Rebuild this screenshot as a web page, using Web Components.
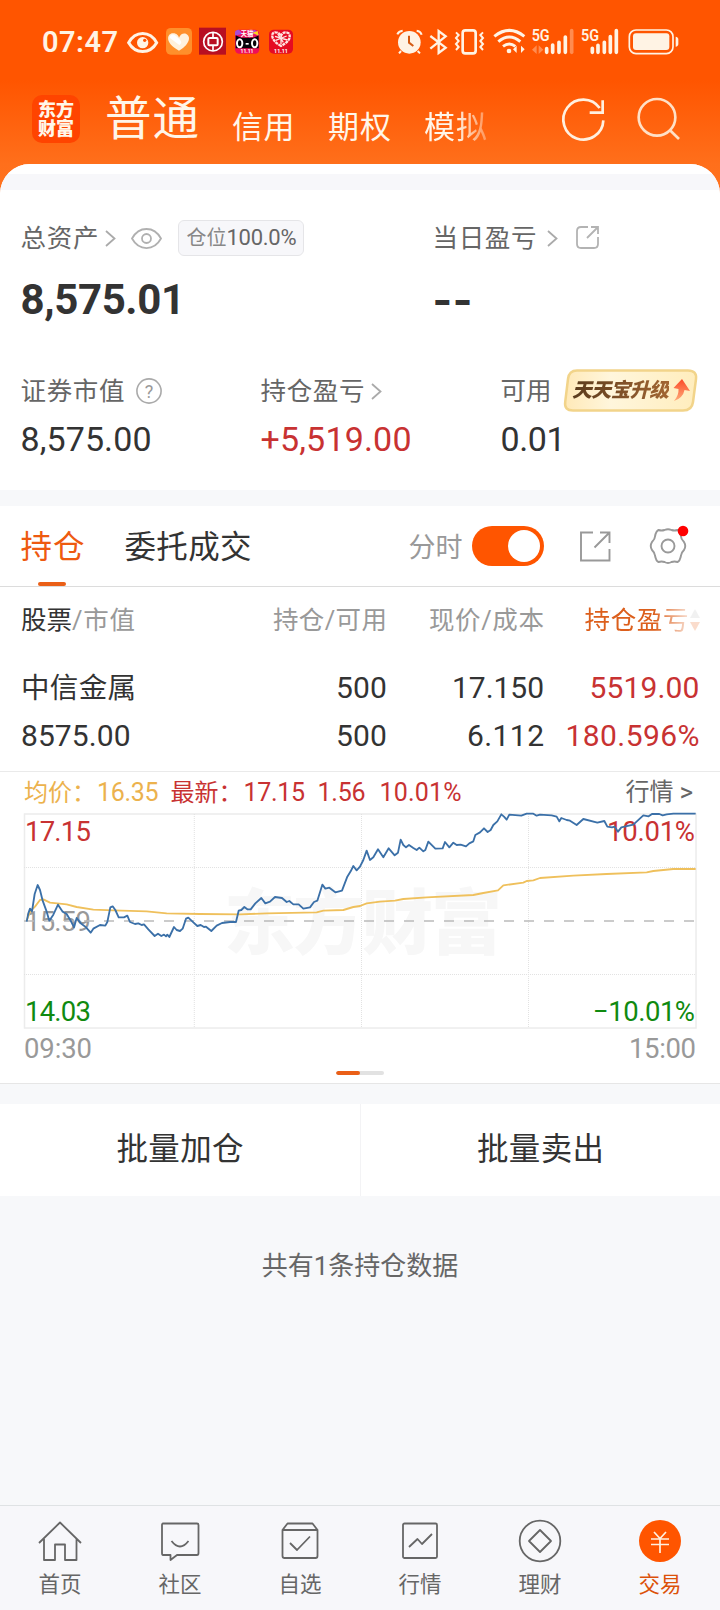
<!DOCTYPE html>
<html lang="zh-CN">
<head>
<meta charset="utf-8">
<title>交易 · 持仓</title>
<style>
body{margin:0;background:#f7f8fa;font-family:Roboto,"Noto Sans CJK SC",sans-serif;color:#333}
</style>
</head>
<body>
<trade-screen>
  <status-bar slot="top"></status-bar>
  <account-tabs slot="top"></account-tabs>
  <asset-summary></asset-summary>
  <holding-tabs></holding-tabs>
  <holding-table></holding-table>
  <minute-chart></minute-chart>
  <batch-actions></batch-actions>
  <list-footer>共有1条持仓数据</list-footer>
  <bottom-nav slot="nav"></bottom-nav>
</trade-screen>
<script>
const define = (name, css, html) => customElements.define(name, class extends HTMLElement {
  constructor(){
    super();
    this.attachShadow({mode:'open'}).innerHTML = `<style>:host{display:block;box-sizing:border-box}*{box-sizing:border-box}svg{display:block;overflow:visible}${css}</style>${html}`;
  }
});

/* One line of text: s = size, w = total width, reached by letter spacing */
customElements.define('fit-text', class extends HTMLElement {
  constructor(){
    super();
    this.attachShadow({mode:'open'}).innerHTML =
      `<style>:host{display:block;white-space:pre;line-height:1.2;width:max-content}span{display:inline-block}</style><span><slot></slot></span>`;
  }
  connectedCallback(){
    this.style.fontSize = this.getAttribute('s') + 'px';
    const w = +this.getAttribute('w'); if(!w) return;
    const span = this.shadowRoot.querySelector('span');
    const n = this.textContent.length - 1;
    const ls = (w - span.getBoundingClientRect().width) / n;
    this.style.letterSpacing = ls.toFixed(3) + 'px';
    span.style.marginRight = (-ls).toFixed(3) + 'px';
  }
});

define('trade-screen', `
  :host{display:flex;flex-direction:column;width:720px;height:1610px;background:#f7f8fa;overflow:hidden}
  header{height:164px;flex:none}
  .shell{background:linear-gradient(#f50 0,#f50 80px,#ff6f1b 164px,#ff731f 200px);height:1505px;flex:none}
  main{background:#f7f8fa;height:1341px;border-radius:30px 30px 0 0;overflow:hidden}
  .cap{height:10px;background:#fff}.gap{height:16px;background:#f7f7fa}
`, `<div class="shell"><header><slot name="top"></slot></header><main><div class="cap"></div><div class="gap"></div><slot></slot></main></div><slot name="nav"></slot>`);

define('status-bar', `
  :host{height:84px;color:#fff3e4}
  .row{display:flex;align-items:center;height:84px;padding-left:42px}
  .r{margin-left:100px}
`, `<div class="row"><fit-text s="29" w="76" style="font-weight:600">07:47</fit-text>
<svg width="170" height="30" viewBox="378 82 510 90" style="margin-left:8px" fill="none">
  <g stroke="#fff3e4" stroke-width="9"><path d="M386 129C406 92 450 92 470 129C450 164 406 164 386 129Z"/></g><circle cx="428" cy="129" r="17" fill="#fff3e4"/><circle cx="434" cy="122" r="5" fill="#f50"/>
  <rect x="498" y="85" width="78" height="80" rx="14" fill="#ff8f2b"/><path d="M537 153C490 128 503 99 520 101C530 101 535 108 537 114C541 104 550 99 559 103C577 113 563 139 537 153Z" fill="#fff1dc"/><path d="M509 114L538 136C550 128 541 120 527 108C518 101 511 104 509 114Z" fill="#fff"/>
  <rect x="597" y="84" width="81" height="81" fill="#b80f22"/><g stroke="#fff" stroke-width="5"><circle cx="639" cy="126" r="28"/><rect x="625" y="115" width="28" height="22" rx="3" stroke-width="6"/><path d="M639 98V115M639 137V154"/></g>
  <rect x="705" y="90" width="73" height="72" rx="13" fill="#ef0e58"/><path d="M705 108V97Q706 91 717 90L728 102ZM778 108L765 91Q753 91 755 101Z" fill="#ab4bd3"/><path d="M757 99L773 94L776 108Z" fill="#ffd21c"/><path d="M707 107Q717 112 725 114H758Q768 112 776 107V146H707Z" fill="#060208"/><g stroke="#fff" stroke-width="6"><ellipse cx="719" cy="131" rx="8" ry="12"/><ellipse cx="764" cy="131" rx="8" ry="12"/></g><rect x="737" y="130" width="9" height="5" fill="#fff"/>
  <text x="741" y="110" font-size="19" font-weight="700" fill="#fff" text-anchor="middle">天猫</text><text x="741" y="159" font-size="15" font-weight="700" fill="#fff" text-anchor="middle">11.11</text>
  <rect x="807" y="90" width="72" height="72" rx="14" fill="#e50b22"/><path d="M843 139C810 121 812 97 827 98C836 98 841 106 843 109C847 98 857 95 866 101C876 115 862 129 843 139Z" fill="#e50b22" stroke="#ffe5e3" stroke-width="7" stroke-dasharray="9 2"/><path d="M825 110L862 121M860 109L827 122M843 113V134M833 103L850 128" stroke="#ffe5e3" stroke-width="4"/><text x="843" y="159" font-size="16" font-weight="700" fill="#fff" text-anchor="middle">11.11</text>
</svg>
<svg class="r" width="286" height="30" viewBox="108 82 858 90" fill="none">
 <g stroke="#fff3e4" stroke-width="6"><path d="M112 104Q116 94 128 93M170 93Q182 95 185 105M123 154L117 161M173 154L180 161"/></g><circle cx="148" cy="128" r="34" fill="#fff3e4"/><path d="M147 108V129L160 139" stroke="#d45a12" stroke-width="6"/>
 <path d="M211 109L257 144L236 160V94L257 110L211 147" stroke="#fff3e4" stroke-width="7"/>
 <rect x="308" y="92" width="39" height="69" rx="8" stroke="#fff3e4" stroke-width="8"/><path d="M288 98l8 8-8 9 8 9-8 9 8 9-8 9M369 98l-8 8 8 9-8 9 8 9-8 9 8 9" stroke="#fff3e4" stroke-width="6"/>
 <g stroke="#fff3e4" stroke-width="9"><path d="M403 110Q448 74 493 110M415 126Q448 98 481 126M429 140Q448 126 466 140"/></g><circle cx="447" cy="154" r="7" fill="#fff3e4"/><path d="M459 149L470 138V160M494 149L483 160V138" fill="#fff3e4"/>
 <g fill="#fff3e4" font-size="48" font-weight="600"><text x="515" y="125" textLength="54" lengthAdjust="spacingAndGlyphs">5G</text><text x="663" y="125" textLength="54" lengthAdjust="spacingAndGlyphs">5G</text></g>
 <g stroke="#fff3e4" stroke-width="11" stroke-linecap="round"><path d="M560 147V158M578 136V158M597 128V158M616 112V158M697 146V158M714 137V158M733 128V158M751 111V158M769 93V158"/><path d="M635 93V158" opacity=".35"/></g><path d="M516 150L530 137V163M550 150L536 137V163" fill="#fff3e4" opacity=".35"/>
 <rect x="808" y="91" width="131" height="71" rx="20" stroke="#fff3e4" stroke-width="5"/><rect x="819" y="101" width="109" height="50" rx="9" fill="#fff3e4"/><path d="M947 111Q955 112 955 120V132Q955 140 947 141Z" fill="#fff3e4"/>
</svg></div>`);

define('account-tabs', `
  :host{height:80px;color:#fff6e9}
  .row{display:grid;grid-template-columns:32px 72px 128px 96px 96px 138px 77px 1fr;height:80px}
  .logo{grid-column:2;margin-top:11px;width:48px;height:48px;border-radius:10px;background:#ff4400;display:flex;flex-direction:column;align-items:center;justify-content:center;font-weight:900}
  .logo fit-text{line-height:19px}
  .big{margin:6px 0 0 1px;line-height:58px}.t{margin-top:24.500px}
  .fade{-webkit-mask:linear-gradient(90deg,#000 50%,#0004 105%);mask:linear-gradient(90deg,#000 50%,#0004 105%)}
`, `<div class="row"><div class="logo"><fit-text s="18" w="36">东方</fit-text><fit-text s="18" w="36">财富</fit-text></div>
<fit-text class="big" s="46.5" w="94">普通</fit-text><fit-text class="t" s="31" w="62.5">信用</fit-text><fit-text class="t" s="31" w="63">期权</fit-text><fit-text class="t fade" s="31" w="63">模拟</fit-text>
<svg width="44" height="46" viewBox="606 290 132 138" fill="none" stroke="#fff0df" stroke-width="8" style="margin-top:13px"><path d="M730 360A60 60 0 1 1 719 323"/><path d="M728 300V337H689"/></svg>
<svg width="44" height="46" viewBox="834 290 132 138" fill="none" stroke="#ffe0c6" stroke-width="8" style="margin-top:13px;margin-left:-2px"><circle cx="894" cy="351" r="55"/><path d="M933 390L960 416"/></svg></div>`);

define('chevron-icon', `:host{width:11px}`, `<svg width="11" height="17" viewBox="0 0 11 17" fill="none" stroke="#aaa" stroke-width="1.8"><path d="M1 1L9.500 8.500L1 16"/></svg>`);

define('asset-summary', `
  :host{height:300px;background:#fff;padding-top:22px}
  .a,.b,.c,.d{display:grid;align-items:center}.cell{display:flex;align-items:center}
  .a,.b{grid-template-columns:412px 1fr;padding-left:20.5px}
  .a{height:52px;color:#666}.b{height:56px;margin-top:8px;font-weight:700}
  .c,.d{grid-template-columns:240px 240px 1fr;padding-left:20.500px}
  .c{height:52px;margin-top:37px;color:#666}.d{height:40px;margin-top:2px}
  .pill{margin-left:16px;width:126px;height:36px;border:1px solid #e5e5e8;border-radius:6px;background:#f7f7fa;display:flex;align-items:center;padding-left:8px}
  .red{color:#c83232}
  .badge{margin:-2px 0 0 12.500px;width:134px;height:43px;display:grid}.badge>*{grid-area:1/1}
  .badge fit-text{font-weight:800;font-style:italic;background:linear-gradient(90deg,#5a3b1c,#a26532);-webkit-background-clip:text;color:transparent;margin:9px 0 0 8px}
`, `<div class="a"><div class="cell"><fit-text s="25.5" w="78">总资产</fit-text><chevron-icon style="margin-left:6px"></chevron-icon>
<svg style="margin-left:15px" width="31" height="21" viewBox="0 0 31 21" fill="none" stroke="#b0b0b0" stroke-width="1.8"><path d="M1 10.500C8-2.200 23-2.200 30 10.500C23 23.200 8 23.200 1 10.500Z"/><circle cx="15.500" cy="10.500" r="4.500"/></svg>
<div class="pill"><fit-text s="20" w="40" style="color:#888">仓位</fit-text><fit-text s="22" w="70">100.0%</fit-text></div></div>
<div class="cell"><fit-text s="25.5" w="104">当日盈亏</fit-text><chevron-icon style="margin-left:10px"></chevron-icon><svg style="margin-left:18px" width="24" height="24" viewBox="0 0 24 24" fill="none" stroke="#b3b3b3" stroke-width="1.8"><path d="M12 1H5Q1 1 1 5V18Q1 22 5 22H18Q22 22 22 18V11M15 1H22V8M22 1L11 12"/></svg></div></div>
<div class="b"><fit-text s="42" w="164.5">8,575.01</fit-text><fit-text s="42" w="40" style="font-family:Inter">--</fit-text></div>
<div class="c"><div class="cell"><fit-text s="25.5" w="104">证券市值</fit-text><svg style="margin-left:11.500px" width="26" height="26" viewBox="0 0 26 26"><circle cx="13" cy="13" r="12.100" fill="none" stroke="#aaa" stroke-width="1.6"/><text x="13" y="19.500" text-anchor="middle" font-size="18" fill="#999">?</text></svg></div>
<div class="cell"><fit-text s="25.5" w="104">持仓盈亏</fit-text><chevron-icon style="margin-left:6px"></chevron-icon></div>
<div class="cell"><fit-text s="25.5" w="51">可用</fit-text><div class="badge">
<svg width="134" height="43" viewBox="0 0 134 43"><defs><linearGradient id="g"><stop stop-color="#ffe9b8"/><stop offset=".35" stop-color="#fff6dc"/><stop offset="1" stop-color="#ffedbd"/></linearGradient><linearGradient id="r" x2="0" y2="1"><stop stop-color="#fb4a28"/><stop offset="1" stop-color="#ffab78"/></linearGradient></defs><path d="M13 1.500H124Q133 1.500 132 10L129 33Q128 41.500 119 41.500H9Q0 41.500 1.200 33L4 10Q5 1.500 13 1.500Z" fill="url(#g)" stroke="#f2d48a" stroke-width="2.500"/><path d="M118 10L126 22L120.500 21Q119 29 110 32Q115 26 114.500 20L109.500 19Z" fill="url(#r)"/></svg>
<fit-text s="20" w="97">天天宝升级</fit-text></div></div></div>
<div class="d"><fit-text s="34" w="131">8,575.00</fit-text><fit-text class="red" s="34" w="151">+5,519.00</fit-text><fit-text s="34" w="65">0.01</fit-text></div>`);

define('holding-tabs', `
  :host{margin-top:16px;height:81px;background:#fff;border-bottom:1px solid #dcdcdc}
  .row{display:grid;grid-template-columns:104px 284px 63px 108px 67.500px 1fr;height:80px;align-items:center;padding-left:20.5px}
  .tab{height:80px;display:grid;grid-template-rows:75.500px 4px;color:#ee5a10}.tab fit-text{margin-top:23px}
  .row>fit-text{margin-top:4px}
  .tab i{width:28px;height:4px;border-radius:2px;background:#ea5f17;margin-left:17px}
  .sw{width:72px;height:40px;border-radius:20px;background:#f50;display:flex;align-items:center;justify-content:flex-end;padding-right:4px}
  .sw i{width:32px;height:32px;border-radius:50%;background:#fff}
`, `<div class="row"><div class="tab"><fit-text s="31.5" w="64">持仓</fit-text><i></i></div><fit-text s="31.5" w="127">委托成交</fit-text><fit-text s="27" w="54" style="color:#999">分时</fit-text><div class="sw"><i></i></div>
<svg width="31" height="31" viewBox="0 0 31 31" fill="none" stroke="#999" stroke-width="1.9"><path d="M13 1.500H1V29.500H29.500V18M20 1.500H29.500V12M29 2L14.500 16.500"/></svg>
<svg width="40" height="40" viewBox="0 0 40 40" fill="none" stroke="#999" stroke-width="1.9" stroke-linejoin="round" style="margin-left:1px"><path d="M10.500 4Q13.500 5 16.500 4Q20 2.500 23.500 4Q26.500 5 29.500 4Q32 5 33 10.500Q33 13 36 16Q38.500 20 36 24Q33 27 33 29.500Q32 35 29.500 36Q26.500 35 23.500 36Q20 38 16.500 36Q13.500 35 10.500 36Q8 35 7 29.500Q7 27 4 24Q1.500 20 4 16Q7 13 7 10.500Q8 5 10.500 4Z"/><circle cx="20" cy="20" r="6.500"/><circle cx="35" cy="5" r="5.300" fill="red" stroke="none"/></svg></div>`);

define('holding-table', `
  :host{height:184px;background:#fff;padding:8px 20.5px 0;color:#333}
  .row{display:grid;grid-template-columns:214px 152px 157px 1fr;padding:0 0 0 .5px;align-items:center;justify-items:end}
  .row>:first-child{justify-self:start}
  .h{height:50px;color:#999}.r1{height:50px;margin-top:17.500px}.r2{height:46px;margin-top:0}
  .stock{display:flex}.red{color:#c83232}
  .sort{display:flex;align-items:center;color:#dc5f1c;-webkit-mask:linear-gradient(90deg,#000 60%,#0003 90%);mask:linear-gradient(90deg,#000 60%,#0003 90%)}
`, `<div class="row h"><div class="stock"><fit-text s="25.5" w="51" style="color:#333">股票</fit-text><fit-text s="25.5" w="63">/市值</fit-text></div><fit-text s="25.5" w="114">持仓/可用</fit-text><fit-text s="25.5" w="115">现价/成本</fit-text><div class="sort"><fit-text s="25.5" w="104">持仓盈亏</fit-text><svg style="margin-left:1px" width="10" height="24" viewBox="0 0 10 24"><path d="M5 1L10 10H0Z" fill="#bbb"/><path d="M5 23L0 14H10Z" fill="#e85200"/></svg></div></div>
<div class="row r1"><fit-text s="28.5" w="115" style="margin-top:4px">中信金属</fit-text><fit-text s="30" w="51">500</fit-text><fit-text s="30" w="92">17.150</fit-text><fit-text class="red" s="30" w="110">5519.00</fit-text></div>
<div class="row r2"><fit-text s="30" w="109.5">8575.00</fit-text><fit-text s="30" w="51">500</fit-text><fit-text s="30" w="77">6.112</fit-text><fit-text class="red" s="30" w="134">180.596%</fit-text></div>`);

define('minute-chart', `
  :host{height:313px;background:#fff;border-top:1px solid #eaeaea;border-bottom:1px solid #e6e6e6}
  .head{display:grid;grid-template-columns:73px 73.500px 73px 74px 62px 246px 1fr;height:42px;align-items:center;padding-left:24px}
  .y{color:#ecb24d}.red{color:#c83232}.more{color:#666}
  .pager{display:flex;width:48px;height:4px;border-radius:2px;overflow:hidden;background:#e2e2e2;margin:43px 0 0 336px}.pager i{width:24px;background:#ea5f17;border-radius:2px}
`, `<div class="head"><fit-text class="y" s="24">均价：</fit-text><fit-text class="y" s="25" w="61.500">16.35</fit-text><fit-text class="red" s="24">最新：</fit-text><fit-text class="red" s="25" w="61.500">17.15</fit-text><fit-text class="red" s="25" w="48">1.56</fit-text><fit-text class="red" s="25" w="82">10.01%</fit-text><div class="more" style="display:flex"><fit-text s="24">行情</fit-text><fit-text s="26" style="margin:-1px 0 0 6px">&gt;</fit-text></div></div>
<svg width="720" height="214" viewBox="0 814 720 214" fill="none" font-size="27.500">
 <rect x="24.500" y="814" width="671.500" height="214" stroke="#ececec" stroke-width="1.500"/>
 <path d="M24 867.500H696M24 974.500H696M194.300 814V1028M361.500 814V1028M528.500 814V1028" stroke="#e2e2e2" stroke-dasharray="1 1"/>
 <text x="224" y="948" font-size="71" font-weight="900" textLength="278" fill="#f7f7f7">东方财富</text>
 <g fill="#c83232"><text x="25" y="841" textLength="66">17.15</text><text x="607" y="841" textLength="88">10.01%</text></g>
 <text x="25" y="931" textLength="66" fill="#999">15.59</text>
 <g fill="#108a10"><text x="25" y="1021" textLength="66">14.03</text><text x="593" y="1021" textLength="102">−10.01%</text></g>
 <g fill="#999"><text x="24" y="1058" textLength="68">09:30</text><text x="629" y="1058" textLength="67">15:00</text></g>
 <path d="M24 921H696" stroke="#bbb" stroke-width="1.500" stroke-dasharray="10 10"/>
 <g transform="translate(0 770) scale(.33333)" stroke-width="5.500" stroke-linejoin="round">
 <polyline stroke="#efc05c" points="80,452 90,425 105,410 120,390 130,388 150,398 200,403 230,411 280,419 340,421 440,424 500,430 600,432 720,433 800,430 950,427 970,422 1030,420 1060,411 1080,408 1100,400 1140,395 1185,392 1210,387 1280,382 1420,375 1450,369 1494,361 1510,346 1570,338 1580,333 1600,331 1620,324 1720,317 1820,312 1940,307 1960,303 2020,297 2087,297"/>
 <polyline stroke="#3b70a8" points="80,455 85,430 90,416 96,424 104,372 113,345 120,360 128,392 140,425 148,452 160,434 174,404 188,425 200,432 212,452 222,472 230,444 242,460 256,470 272,488 280,476 300,465 316,467 322,456 331,412 338,409 346,420 356,442 372,442 382,437 390,456 405,462 415,460 425,465 432,463 445,478 464,498 474,491 484,498 492,494 498,499 502,494 508,501 522,471 530,480 540,483 548,476 558,446 565,443 580,457 592,468 602,465 612,471 618,470 634,483 650,467 666,459 690,456 708,456 716,422 724,420 733,411 742,418 752,418 766,400 784,384 796,400 810,395 825,381 846,384 860,396 868,393 880,403 896,403 910,416 930,412 942,396 952,392 967,344 976,356 988,353 1006,367 1026,362 1042,320 1052,304 1060,288 1070,301 1080,290 1090,270 1100,242 1110,270 1120,262 1134,238 1150,262 1166,235 1184,256 1194,248 1202,209 1210,225 1218,232 1227,225 1240,234 1250,240 1258,233 1270,244 1276,240 1285,215 1306,236 1328,235 1335,216 1348,232 1360,218 1370,225 1382,224 1398,229 1408,220 1420,214 1426,195 1440,187 1452,175 1463,186 1472,180 1480,165 1492,154 1504,133 1512,140 1520,149 1528,134 1564,137 1580,131 1600,131 1610,137 1620,134 1655,136 1670,140 1678,154 1684,144 1700,150 1710,152 1730,165 1750,147 1792,158 1813,153 1822,170 1836,172 1844,170 1854,185 1864,172 1900,164 1930,136 1946,139 1956,132 1978,132 1988,136 2000,133 2020,131 2087,131"/></g>
</svg><div class="pager"><i></i></div>`);

define('batch-actions', `
  :host{margin-top:20px;height:92px}
  .row{display:grid;grid-template-columns:1fr 1fr;height:92px;background:#fff}
  .row div{display:grid;place-items:center}.row div+div{border-left:1px solid #f3f3f5}
`, `<div class="row"><div><fit-text s="31.5" w="127">批量加仓</fit-text></div><div><fit-text s="31.5" w="127">批量卖出</fit-text></div></div>`);

define('list-footer', `:host{margin-top:50px;height:40px;line-height:40px;text-align:center;font-size:26px;color:#666}`, `<slot></slot>`);

define('nav-item', `
  :host{display:flex;flex-direction:column;align-items:center;color:#666}
  ::slotted(svg){display:block;width:44px;height:44px;fill:none;stroke:#666;stroke-width:1.8;stroke-linejoin:round;margin-top:13px}
  span{font-size:21.5px;line-height:26px;margin-top:9px}
  :host([active]) span{color:#dc5109}
`, `<slot name="icon"></slot><span><slot></slot></span>`);

define('bottom-nav', `
  :host{height:105px;background:#f7f7fa;border-top:1px solid #dfe2e4}
  .row{display:grid;grid-template-columns:repeat(6,1fr)}
`, `<div class="row">
<nav-item><svg slot="icon" viewBox="0 0 44 44"><path d="M1 24L22 3.500L43 24M6 20V41H17V25.500H27V41H38.500V20"/></svg>首页</nav-item>
<nav-item><svg slot="icon" viewBox="0 0 44 44"><path d="M5 4.500H39Q40.500 4.500 40.500 6V34Q40.500 36 39 36H19L12.500 41V36H5Q4 36 4 34V6Q4 4.500 5 4.500ZM13.500 22Q22 33 30.500 22"/></svg>社区</nav-item>
<nav-item><svg slot="icon" viewBox="0 0 44 44"><path d="M4.500 11L9.500 4.500H34.500L39.500 11ZM4.500 11H39.500V37Q39.500 39 37.500 39H6.500Q4.500 39 4.500 37ZM12 24L19 31L32 17.500"/></svg>自选</nav-item>
<nav-item><svg slot="icon" viewBox="0 0 44 44"><rect x="5" y="4.500" width="34" height="34.500" rx="1.500"/><path d="M11 28L19.500 20L24 25L34 15"/></svg>行情</nav-item>
<nav-item><svg slot="icon" viewBox="0 0 44 44"><circle cx="22" cy="22" r="20.300"/><path d="M22 11L33 22L22 33L11 22Z"/></svg>理财</nav-item>
<nav-item active><svg slot="icon" viewBox="0 0 44 44"><circle cx="22" cy="22" r="21" fill="#f50" stroke="none"/><path d="M16 13L22 19.500L28 13M13 20H31M13 25.500H31M22 20V34" stroke="#fff0e0" stroke-width="1.700"/></svg>交易</nav-item></div>`);
</script>
</body>
</html>
